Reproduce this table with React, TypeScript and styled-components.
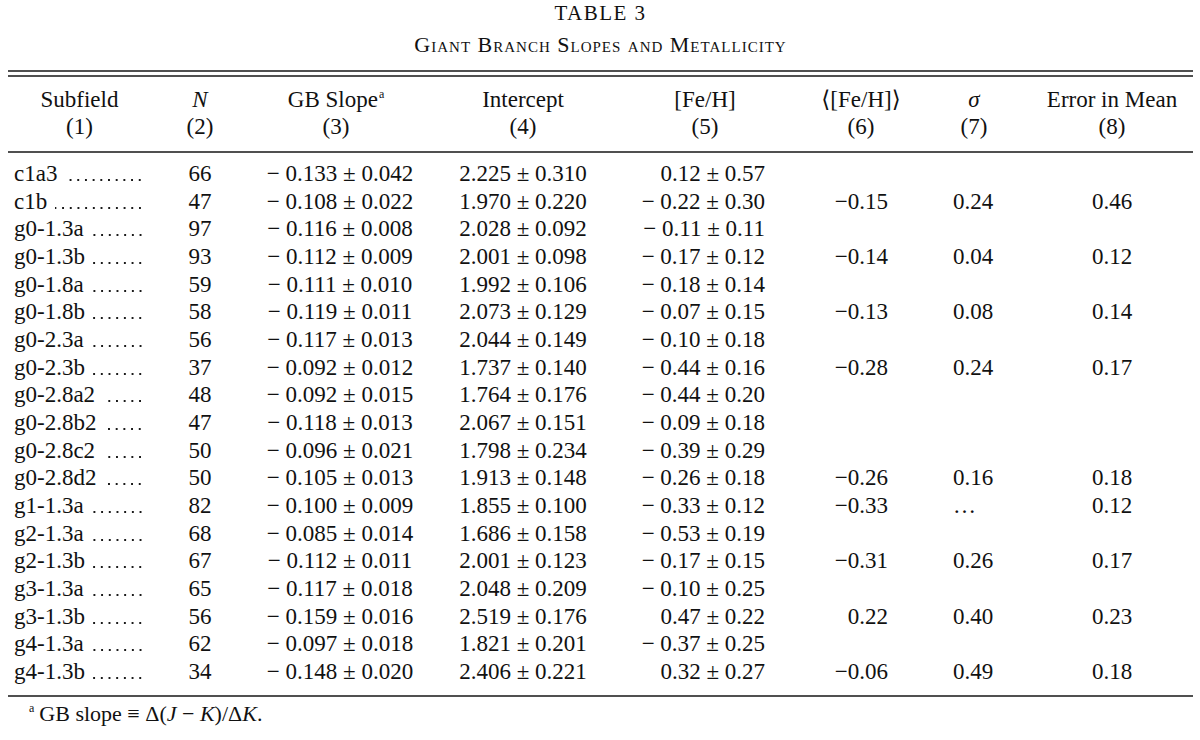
import React from "react";
import styled, { createGlobalStyle } from "styled-components";

const Global = createGlobalStyle`
  html, body { margin: 0; padding: 0; background: #fff; }
  body {
    font-family: "Liberation Serif", "Times New Roman", "DejaVu Serif", serif;
    color: #111;
  }
`;

const COLS = "143px 98px 174px 200px 164px 148px 96px 162px";

const Page = styled.div`
  width: 1200px;
  height: 740px;
  box-sizing: border-box;
  padding: 0 7px 0 8px;
  display: flex;
  flex-direction: column;
  overflow: hidden;
`;

const Title = styled.div`
  text-align: center;
  font-size: 21px;
  line-height: 26px;
  letter-spacing: 1.5px;
`;

const Subtitle = styled.div`
  text-align: center;
  font-size: 22px;
  line-height: 26px;
  letter-spacing: 1px;
  font-variant: small-caps;
  margin-top: 6px;
`;

const DoubleRule = styled.div`
  margin-top: 12px;
  height: 3px;
  border-top: 2px solid #505050;
  border-bottom: 2px solid #505050;
`;

const Head = styled.div`
  display: grid;
  grid-template-columns: ${COLS};
  padding: 9px 0 11px;
  border-bottom: 2px solid #505050;
  font-size: 23px;
  line-height: 27px;
`;

const HeadCell = styled.div<{ $pl?: number; $pr?: number }>`
  display: flex;
  flex-direction: column;
  align-items: center;
  text-align: center;
  white-space: nowrap;
  padding-left: ${(p) => p.$pl ?? 0}px;
  padding-right: ${(p) => p.$pr ?? 0}px;
`;

const Sup = styled.sup`
  font-size: 12px;
  line-height: 0;
  vertical-align: 9px;
  margin-left: 1px;
`;

const Ital = styled.i`
  font-style: italic;
`;

const Body = styled.div`
  display: flex;
  flex-direction: column;
  padding: 7px 0 10px;
  border-bottom: 2px solid #505050;
`;

const Row = styled.div`
  display: grid;
  grid-template-columns: ${COLS};
  height: 27.67px;
  font-size: 23px;
  line-height: 27.67px;
  white-space: nowrap;
`;

const Cell = styled.div<{ $align?: "left" | "center" | "right"; $pl?: number; $pr?: number }>`
  text-align: ${(p) => p.$align ?? "center"};
  padding-left: ${(p) => p.$pl ?? 0}px;
  padding-right: ${(p) => p.$pr ?? 0}px;
`;

const NameCell = styled.div`
  display: flex;
  padding: 0 6px;
  min-width: 0;
`;

const Name = styled.span`
  flex: none;
`;

const Leader = styled.span`
  flex: 1;
  min-width: 0;
  margin-left: 8px;
  background-image: radial-gradient(circle, #1a1a1a 1.1px, transparent 1.5px);
  background-size: 7.7px 4px;
  background-repeat: repeat-x;
  background-position: right 1px top 18px;
`;

const Footnote = styled.div`
  margin-top: 4px;
  padding-left: 21px;
  font-size: 22px;
  line-height: 26px;
`;

const FootSup = styled.sup`
  font-size: 12px;
  line-height: 0;
  vertical-align: 9px;
  margin-right: 5px;
`;

type R = [string, string, string, string, string, string?, string?, string?];

const pm = (a: string, b: string) => `${a} ± ${b}`;

const rows: R[] = [
  ["c1a3", "66", pm("− 0.133", "0.042"), pm("2.225", "0.310"), pm("0.12", "0.57")],
  ["c1b", "47", pm("− 0.108", "0.022"), pm("1.970", "0.220"), pm("− 0.22", "0.30"), "−0.15", "0.24", "0.46"],
  ["g0-1.3a", "97", pm("− 0.116", "0.008"), pm("2.028", "0.092"), pm("− 0.11", "0.11")],
  ["g0-1.3b", "93", pm("− 0.112", "0.009"), pm("2.001", "0.098"), pm("− 0.17", "0.12"), "−0.14", "0.04", "0.12"],
  ["g0-1.8a", "59", pm("− 0.111", "0.010"), pm("1.992", "0.106"), pm("− 0.18", "0.14")],
  ["g0-1.8b", "58", pm("− 0.119", "0.011"), pm("2.073", "0.129"), pm("− 0.07", "0.15"), "−0.13", "0.08", "0.14"],
  ["g0-2.3a", "56", pm("− 0.117", "0.013"), pm("2.044", "0.149"), pm("− 0.10", "0.18")],
  ["g0-2.3b", "37", pm("− 0.092", "0.012"), pm("1.737", "0.140"), pm("− 0.44", "0.16"), "−0.28", "0.24", "0.17"],
  ["g0-2.8a2", "48", pm("− 0.092", "0.015"), pm("1.764", "0.176"), pm("− 0.44", "0.20")],
  ["g0-2.8b2", "47", pm("− 0.118", "0.013"), pm("2.067", "0.151"), pm("− 0.09", "0.18")],
  ["g0-2.8c2", "50", pm("− 0.096", "0.021"), pm("1.798", "0.234"), pm("− 0.39", "0.29")],
  ["g0-2.8d2", "50", pm("− 0.105", "0.013"), pm("1.913", "0.148"), pm("− 0.26", "0.18"), "−0.26", "0.16", "0.18"],
  ["g1-1.3a", "82", pm("− 0.100", "0.009"), pm("1.855", "0.100"), pm("− 0.33", "0.12"), "−0.33", "…", "0.12"],
  ["g2-1.3a", "68", pm("− 0.085", "0.014"), pm("1.686", "0.158"), pm("− 0.53", "0.19")],
  ["g2-1.3b", "67", pm("− 0.112", "0.011"), pm("2.001", "0.123"), pm("− 0.17", "0.15"), "−0.31", "0.26", "0.17"],
  ["g3-1.3a", "65", pm("− 0.117", "0.018"), pm("2.048", "0.209"), pm("− 0.10", "0.25")],
  ["g3-1.3b", "56", pm("− 0.159", "0.016"), pm("2.519", "0.176"), pm("0.47", "0.22"), "0.22", "0.40", "0.23"],
  ["g4-1.3a", "62", pm("− 0.097", "0.018"), pm("1.821", "0.201"), pm("− 0.37", "0.25")],
  ["g4-1.3b", "34", pm("− 0.148", "0.020"), pm("2.406", "0.221"), pm("0.32", "0.27"), "−0.06", "0.49", "0.18"],
];

export default function App() {
  return (
    <>
      <Global />
      <Page>
        <Title>TABLE 3</Title>
        <Subtitle>Giant Branch Slopes and Metallicity</Subtitle>
        <DoubleRule />
        <Head>
          <HeadCell $pl={6} $pr={6}>
            <span>Subfield</span>
            <span>(1)</span>
          </HeadCell>
          <HeadCell>
            <Ital>N</Ital>
            <span>(2)</span>
          </HeadCell>
          <HeadCell>
            <span>
              GB Slope<Sup>a</Sup>
            </span>
            <span>(3)</span>
          </HeadCell>
          <HeadCell>
            <span>Intercept</span>
            <span>(4)</span>
          </HeadCell>
          <HeadCell>
            <span>[Fe/H]</span>
            <span>(5)</span>
          </HeadCell>
          <HeadCell>
            <span>⟨[Fe/H]⟩</span>
            <span>(6)</span>
          </HeadCell>
          <HeadCell $pr={18}>
            <Ital>σ</Ital>
            <span>(7)</span>
          </HeadCell>
          <HeadCell>
            <span>Error in Mean</span>
            <span>(8)</span>
          </HeadCell>
        </Head>
        <Body>
          {rows.map((r) => (
            <Row key={r[0]}>
              <NameCell>
                <Name>{r[0]}</Name>
                <Leader />
              </NameCell>
              <Cell>{r[1]}</Cell>
              <Cell $pl={8}>{r[2]}</Cell>
              <Cell>{r[3]}</Cell>
              <Cell $align="right" $pr={22}>{r[4]}</Cell>
              <Cell $align="right" $pr={47}>{r[5] ?? ""}</Cell>
              <Cell $align="left" $pl={18}>{r[6] ?? ""}</Cell>
              <Cell>{r[7] ?? ""}</Cell>
            </Row>
          ))}
        </Body>
        <Footnote>
          <FootSup>a</FootSup>GB slope ≡ Δ(<Ital>J</Ital> − <Ital>K</Ital>)/Δ<Ital>K</Ital>.
        </Footnote>
      </Page>
    </>
  );
}
